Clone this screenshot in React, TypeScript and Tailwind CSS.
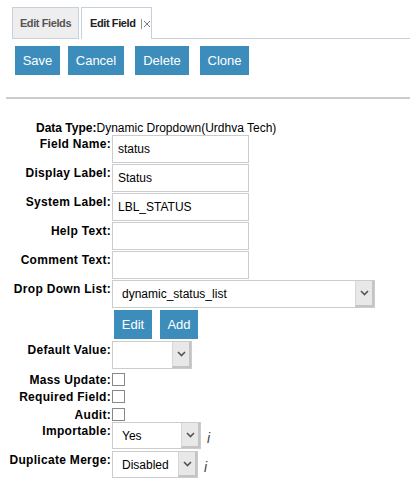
import React from "react";

function Chevron() {
  return (
    <svg width="9" height="6" viewBox="0 0 9 6">
      <polyline points="1,1 4.5,4.5 8,1" fill="none" stroke="#555" strokeWidth="1.6" />
    </svg>
  );
}

function Select({ w, h, text, boxW }: { w: string; h: string; text: string; boxW: string }) {
  return (
    <div className={`${w} ${h} flex border border-[#cccccc] bg-white`}>
      <div className="flex-1 flex items-center pl-[9px] text-[12px] text-black">{text}</div>
      <div className={`${boxW} flex items-center justify-center bg-[#e8e8e8] border-l border-[#d6d6d6] border-r-2 border-b-2 border-r-[#c4c4c4] border-b-[#c4c4c4]`}>
        <Chevron />
      </div>
    </div>
  );
}

function Label({ children }: { children: React.ReactNode }) {
  return (
    <div className="w-[112px] shrink-0 text-right pr-[1px] font-bold tracking-[0.3px] leading-[14px] pt-[2px] whitespace-nowrap">
      {children}
    </div>
  );
}

function TextInput({ value }: { value?: string }) {
  return (
    <div className="w-[137px] h-[28px] mb-[1px] border border-[#cccccc] bg-white flex items-center px-[5px] text-[12px]">
      {value}
    </div>
  );
}

function Btn({ children, className }: { children: React.ReactNode; className?: string }) {
  return (
    <div className={`h-[29px] bg-[#3c8dbc] text-white text-[13px] flex items-center justify-center ${className ?? ""}`}>
      {children}
    </div>
  );
}

function Info() {
  return <span className="italic text-[14px] text-[#444] font-['Liberation_Sans',Arial,sans-serif] leading-none">i</span>;
}

export default function App() {
  return (
    <div className="w-[410px] h-[504px] bg-white text-black text-[12px] font-['Liberation_Sans',Arial,sans-serif] overflow-hidden">
      {/* Tabs */}
      <div className="flex pt-[7px] pl-[12px]">
        <div className="w-[67px] h-[32px] bg-[#eeeeee] border border-[#c5d0dc] flex items-center justify-center text-[11px] font-bold tracking-[-0.4px] text-[#555]">
          Edit Fields
        </div>
        <div className="ml-[2px] w-[71px] h-[32px] bg-white border border-b-0 border-[#c5d0dc] flex items-center pl-[8px] text-[11px] font-bold tracking-[-0.4px] text-[#222]">
          Edit Field
          <span className="ml-[5px] flex items-center text-[#777] font-normal">
            <span className="w-px h-[10px] bg-[#999] mr-[1px]" />
            <svg width="8" height="8" viewBox="0 0 8 8">
              <path d="M1 1 L7 7 M7 1 L1 7" stroke="#777" strokeWidth="1" />
            </svg>
          </span>
        </div>
        <div className="flex-1 h-[32px] border-b border-[#c5d0dc]" />
      </div>

      {/* Action buttons */}
      <div className="flex mt-[7px]">
        <Btn className="ml-[15px] w-[45px]">Save</Btn>
        <Btn className="ml-[8px] w-[56px]">Cancel</Btn>
        <Btn className="ml-[11px] w-[54px]">Delete</Btn>
        <Btn className="ml-[11px] w-[49px]">Clone</Btn>
      </div>

      <div className="ml-[6px] mt-[22px] h-[2px] bg-[#cccccc]" />

      {/* Data type */}
      <div className="mt-[22px] pl-[36px] leading-[14px] whitespace-nowrap">
        <span className="font-bold">Data Type:</span>
        <span>Dynamic Dropdown(Urdhva Tech)</span>
      </div>

      {/* Form */}
      <div className="flex flex-col">
        <div className="flex">
          <Label>Field Name:</Label>
          <TextInput value="status" />
        </div>
        <div className="flex">
          <Label>Display Label:</Label>
          <TextInput value="Status" />
        </div>
        <div className="flex">
          <Label>System Label:</Label>
          <TextInput value="LBL_STATUS" />
        </div>
        <div className="flex">
          <Label>Help Text:</Label>
          <TextInput />
        </div>
        <div className="flex">
          <Label>Comment Text:</Label>
          <TextInput />
        </div>
        <div className="flex">
          <Label>Drop Down List:</Label>
          <Select w="w-[263px]" h="h-[28px]" text="dynamic_status_list" boxW="w-[19px]" />
        </div>
        <div className="flex mt-[2px] pl-[114px]">
          <Btn className="w-[38px]">Edit</Btn>
          <Btn className="ml-[8px] w-[38px]">Add</Btn>
        </div>
        <div className="flex mt-[2px]">
          <Label>Default Value:</Label>
          <Select w="w-[80px]" h="h-[28px]" text="" boxW="w-[19px]" />
        </div>
        <div className="flex mt-[4px] h-[17px]">
          <div className="w-[112px] shrink-0 text-right pr-[1px] font-bold tracking-[0.3px] leading-[14px] whitespace-nowrap">Mass Update:</div>
          <div className="w-[13px] h-[13px] border border-[#888] bg-white" />
        </div>
        <div className="flex h-[18px]">
          <div className="w-[112px] shrink-0 text-right pr-[1px] font-bold tracking-[0.3px] leading-[14px] whitespace-nowrap">Required Field:</div>
          <div className="w-[13px] h-[13px] border border-[#888] bg-white" />
        </div>
        <div className="flex h-[14px]">
          <div className="w-[112px] shrink-0 text-right pr-[1px] font-bold tracking-[0.3px] leading-[14px] whitespace-nowrap">Audit:</div>
          <div className="w-[13px] h-[13px] border border-[#888] bg-white" />
        </div>
        <div className="flex mt-[0px]">
          <Label>Importable:</Label>
          <Select w="w-[89px]" h="h-[27px]" text="Yes" boxW="w-[19px]" />
          <div className="ml-[6px] pt-[8px]"><Info /></div>
        </div>
        <div className="flex mt-[2px]">
          <Label>Duplicate Merge:</Label>
          <Select w="w-[86px]" h="h-[27px]" text="Disabled" boxW="w-[19px]" />
          <div className="ml-[6px] pt-[8px]"><Info /></div>
        </div>
      </div>
    </div>
  );
}
